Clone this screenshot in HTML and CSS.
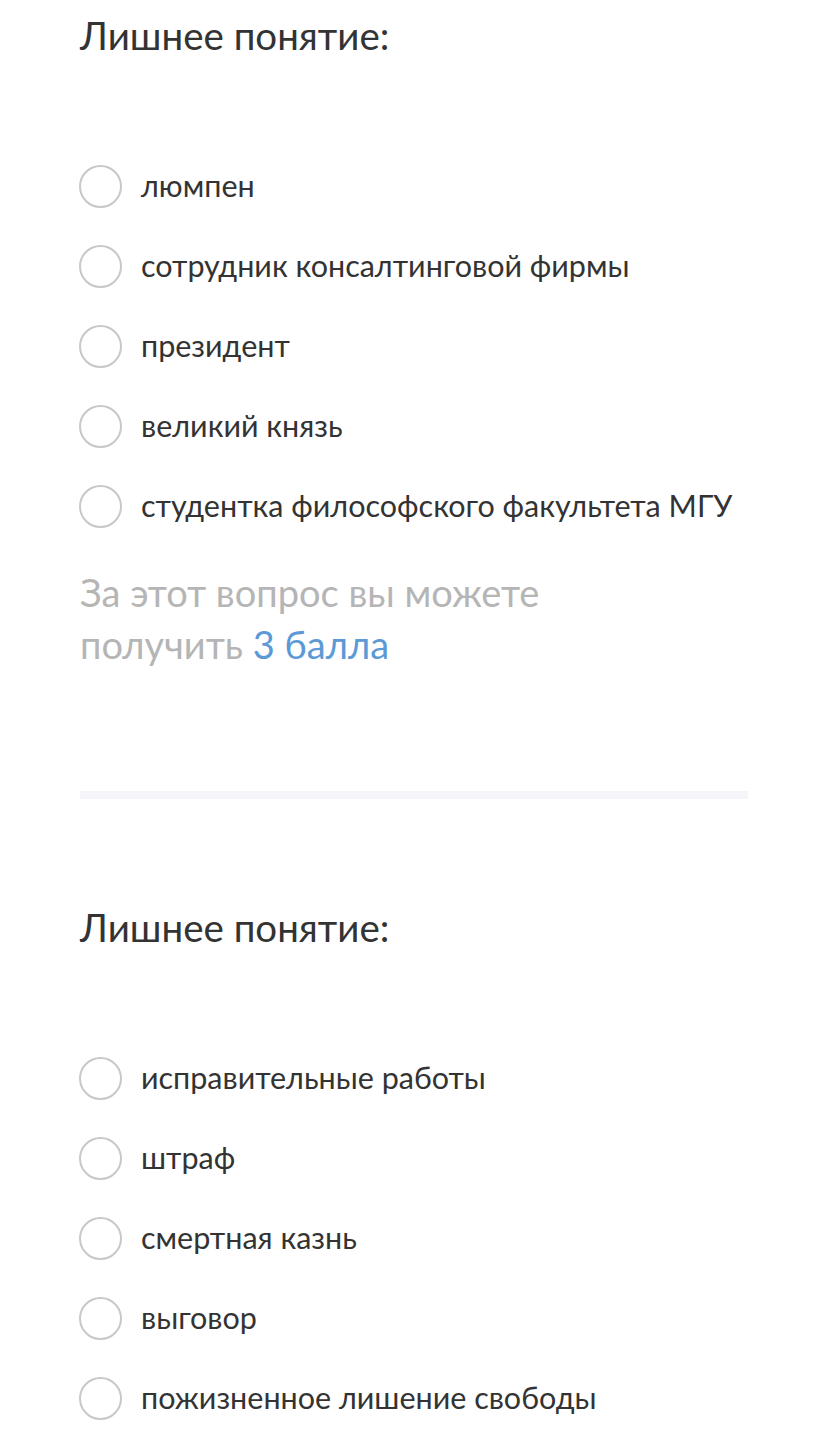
FILE: index.html
```html
<!DOCTYPE html>
<html>
<head>
    <title>Лишнее понятие</title>
    <link rel="stylesheet" href="styles.css">
</head>
<body>
    <div class="page">
        <div class="question">
            <h2>Лишнее понятие:</h2>
            <ul class="options">
                <li><span class="radio"></span>люмпен</li>
                <li><span class="radio"></span>сотрудник консалтинговой фирмы</li>
                <li><span class="radio"></span>президент</li>
                <li><span class="radio"></span>великий князь</li>
                <li><span class="radio"></span>студентка философского факультета МГУ</li>
            </ul>
            <p class="points">За этот вопрос вы можете<br>получить&nbsp;<span class="score">3 балла</span></p>
        </div>
        <div class="divider"></div>
        <div class="question">
            <h2>Лишнее понятие:</h2>
            <ul class="options">
                <li><span class="radio"></span>исправительные работы</li>
                <li><span class="radio"></span>штраф</li>
                <li><span class="radio"></span>смертная казнь</li>
                <li><span class="radio"></span>выговор</li>
                <li><span class="radio"></span>пожизненное лишение свободы</li>
            </ul>
        </div>
    </div>
</body>
</html>
```

FILE: styles.css
```css
body {
    margin: 0;
    font-family: Lato, "Noto Sans", sans-serif;
    color: #333;
    background: #fff;
}
.page {
    padding: 11px 80px 0;
}
.question h2 {
    margin: 0;
    font-size: 38.5px;
    font-weight: 400;
    line-height: 48px;
    color: #333;
}
.options {
    list-style: none;
    margin: 87px 0 0;
    padding: 0;
}
.options li {
    display: flex;
    align-items: center;
    height: 80px;
    font-size: 30.5px;
    line-height: 36px;
    padding-bottom: 3px;
    box-sizing: border-box;
    color: #333;
}
.radio {
    width: 39px;
    height: 39px;
    border: 2px solid #c8c8c8;
    border-radius: 50%;
    margin: 3px 19px 0 -1px;
    flex-shrink: 0;
}
.points {
    margin: 20px 0 0;
    font-size: 38px;
    line-height: 52px;
    color: #b5b5b5;
}
.score {
    color: #5b9ad6;
}
.divider {
    height: 8px;
    margin: 121px 0 104px;
    background-color: #f5f5fa;
}
```
